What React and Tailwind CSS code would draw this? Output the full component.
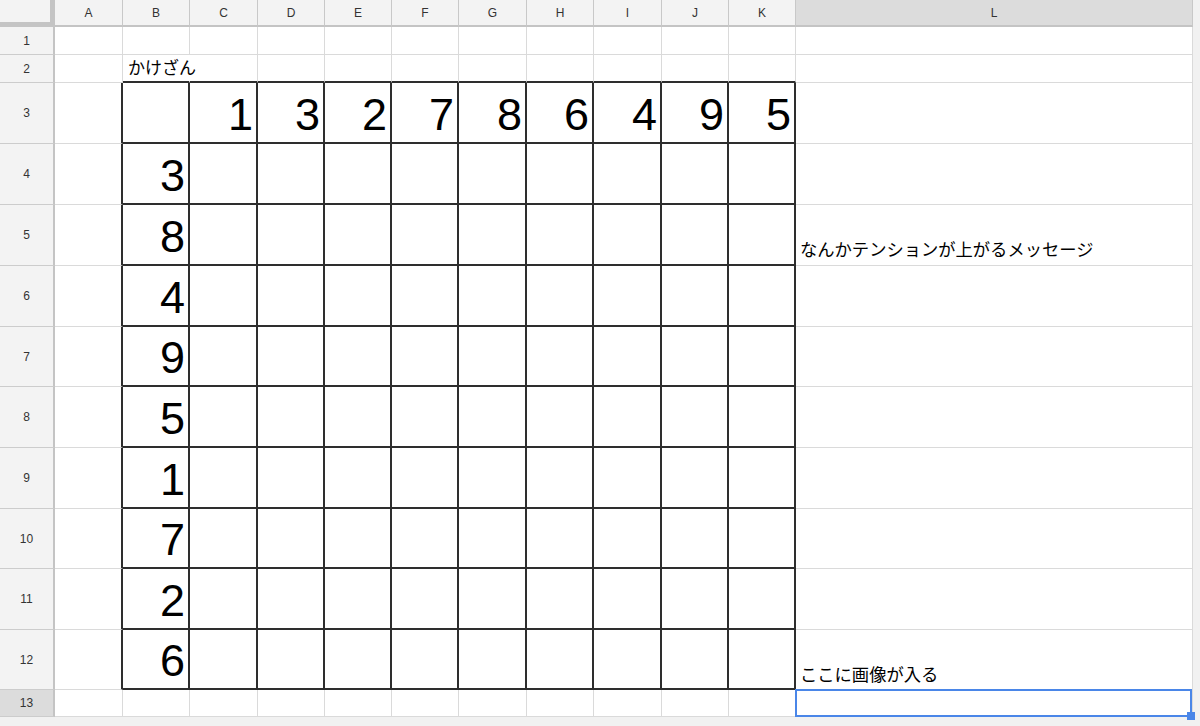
import React from "react";

const LETTERS = ["A", "B", "C", "D", "E", "F", "G", "H", "I", "J", "K", "L"];
const TOP = { 3: "1", 4: "3", 5: "2", 6: "7", 7: "8", 8: "6", 9: "4", 10: "9", 11: "5" };
const LEFT = { 4: "3", 5: "8", 6: "4", 7: "9", 8: "5", 9: "1", 10: "7", 11: "2", 12: "6" };

function rightCls(r, c) {
  if (r >= 3 && r <= 12 && c >= 1 && c <= 11) return "border-r-2 border-r-[#2e2e2e]";
  if (r === 2 && c === 2) return "border-r border-r-transparent";
  return "border-r border-r-[#dadada]";
}
function bottomCls(r, c) {
  if (r >= 2 && r <= 12 && c >= 2 && c <= 11) return "border-b-2 border-b-[#2e2e2e]";
  return "border-b border-b-[#dadada]";
}

function BodyCell({ r, c }) {
  const cls = "relative flex min-w-0 " + rightCls(r, c) + " " + bottomCls(r, c);
  let content = null;
  let inner = "";
  if (r === 2 && c === 2) {
    content = "かけざん";
    inner = "items-end pl-[5px] pb-[4px] text-[17px] leading-none whitespace-nowrap text-black";
  } else if (r === 3 && TOP[c]) {
    content = TOP[c];
    inner = "items-end justify-end pr-[3px] pb-[5px] text-[45px] leading-none text-black";
  } else if (c === 2 && LEFT[r]) {
    content = LEFT[r];
    inner = "items-end justify-end pr-[3px] pb-[5px] text-[45px] leading-none text-black";
  } else if (c === 12 && r === 5) {
    content = "なんかテンションが上がるメッセージ";
    inner = "items-end pl-[4px] pb-[6px] text-[17.3px] leading-none whitespace-nowrap text-black";
  } else if (c === 12 && r === 12) {
    content = "ここに画像が入る";
    inner = "items-end pl-[4px] pb-[5px] text-[17.3px] leading-none whitespace-nowrap text-black";
  }
  const selected = r === 13 && c === 12;
  return (
    <div className={cls + " " + inner}>
      {content}
      {selected && (
        <div className="absolute -left-px -top-px right-0 -bottom-px z-10 border-2 border-[#4a86e8]">
          <div className="absolute -right-[5px] -bottom-[5px] h-[8px] w-[8px] bg-[#4a86e8]"></div>
        </div>
      )}
    </div>
  );
}

export default function App() {
  const cells = [];
  cells.push(
    <div key="corner" className="bg-[#f3f3f3] border-r-[5px] border-b-[5px] border-[#c4c4c4]"></div>
  );
  LETTERS.forEach((L) => {
    const sel = L === "L";
    cells.push(
      <div
        key={"h" + L}
        className={
          (sel ? "bg-[#dcdcdc] " : "bg-[#f3f3f3] ") +
          "flex items-center justify-center border-r border-r-[#c8c8c8] border-b-2 border-b-[#c4c4c4] text-[12px] text-[#333]"
        }
      >
        {L}
      </div>
    );
  });
  for (let r = 1; r <= 13; r++) {
    const sel = r === 13;
    cells.push(
      <div
        key={"rh" + r}
        className={
          (sel ? "bg-[#dcdcdc] " : "bg-[#f3f3f3] ") +
          "flex items-center justify-center border-r-2 border-r-[#c4c4c4] border-b border-b-[#cccccc] text-[12px] text-[#333]"
        }
      >
        {r}
      </div>
    );
    for (let c = 1; c <= 12; c++) {
      cells.push(<BodyCell key={r + "-" + c} r={r} c={c} />);
    }
  }

  return (
    <div
      className="flex h-[726px] w-[1200px] flex-col overflow-hidden bg-[#f1f1f1]"
      style={{ fontFamily: '"Liberation Sans", Arial, "Noto Sans CJK JP", sans-serif' }}
    >
      <div className="flex">
        <div className="grid w-[1193px] bg-white grid-cols-[55px_68px_67px_68px_67px_67px_67px_68px_67px_68px_67px_67px_397px] grid-rows-[27px_28px_28px_61px_61px_61px_61px_60px_61px_61px_60px_61px_60px_27px]">
          {cells}
        </div>
      </div>
    </div>
  );
}
